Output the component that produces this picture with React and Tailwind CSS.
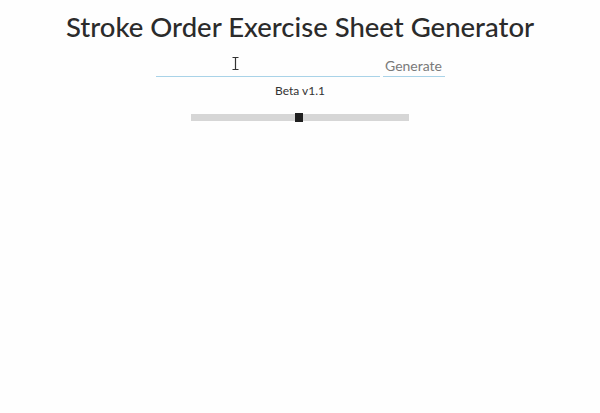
const Cursor = () => (
  <svg width="7" height="13" viewBox="0 0 7 13" className="absolute left-[76px] top-[5px]">
    <path d="M0.5 0.5h6M0.5 12.5h6M3.5 0.5v12" stroke="#333" strokeWidth="1.2" fill="none" />
  </svg>
);

export default function App() {
  return (
    <div className="w-[600px] h-[413px] bg-[#fefefe] flex flex-col items-center font-['Lato','Noto_Sans',sans-serif]">
      <h1 className="mt-[9px] text-[27.5px] leading-[36px] font-medium text-[#2b2b2b]">
        Stroke Order Exercise Sheet Generator
      </h1>
      <div className="mt-[7px] flex items-end gap-[3px]">
        <div className="relative w-[224px] h-[25px] border-b border-[#a9d3e8]">
          <Cursor />
        </div>
        <button className="w-[62px] h-[25px] border-b border-[#a9d3e8] pt-[3px] text-[14px] text-[#7a7a7a] leading-[20px] text-center">
          Generate
        </button>
      </div>
      <div className="mt-[6px] text-[12px] leading-[16px] text-[#333]">Beta v1.1</div>
      <div className="mt-[15px] relative w-[218px] h-[7px] bg-[#d6d6d6]">
        <div className="absolute left-[104px] top-[-1px] w-[8px] h-[9px] bg-[#1f1f1f]" />
      </div>
    </div>
  );
}
